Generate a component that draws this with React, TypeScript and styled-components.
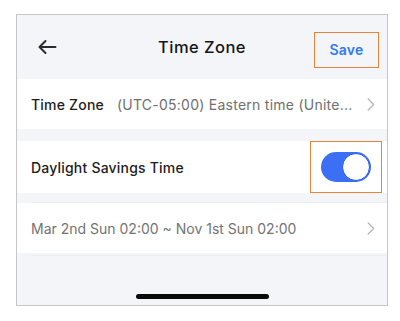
import React from 'react';
import styled, { createGlobalStyle } from 'styled-components';

const GlobalStyle = createGlobalStyle`
  html, body {
    margin: 0;
    padding: 0;
    background: #ffffff;
  }
  body {
    font-family: Inter, "Noto Sans", sans-serif;
    -webkit-font-smoothing: antialiased;
  }
`;

const App = () => {
  return (
    <>
      <GlobalStyle />
      <Page>
        <Frame>
          <Header>
            <BackButton aria-label="back">
              <svg width="20" height="16" viewBox="0 0 20 16" fill="none">
                <path
                  d="M18.5 8H2.5M8.5 2L2.5 8l6 6"
                  stroke="#2b2b2b"
                  strokeWidth="2"
                  strokeLinecap="round"
                  strokeLinejoin="round"
                />
              </svg>
            </BackButton>
            <Title>Time Zone</Title>
            <SaveBox>
              <SaveText>Save</SaveText>
            </SaveBox>
          </Header>

          <Row height={50}>
            <Label>Time Zone</Label>
            <Value>(UTC-05:00) Eastern time (Unite...</Value>
            <Chevron />
          </Row>

          <Gap size={12} />

          <Row height={52}>
            <Label>Daylight Savings Time</Label>
            <ToggleBox>
              <Toggle>
                <Knob />
              </Toggle>
            </ToggleBox>
          </Row>

          <Gap size={10} divider />

          <Row height={50}>
            <Muted>Mar 2nd Sun 02:00 ~ Nov 1st Sun 02:00</Muted>
            <Chevron />
          </Row>

          <Divider />

          <Bottom>
            <HomeBar />
          </Bottom>
        </Frame>
      </Page>
    </>
  );
};

const Chevron = () => (
  <ChevronWrap>
    <svg width="8" height="13" viewBox="0 0 8 13" fill="none">
      <path d="M1.2 1l5.5 5.5-5.5 5.5" stroke="#b5b5b5" strokeWidth="1.2" strokeLinecap="round" strokeLinejoin="round" />
    </svg>
  </ChevronWrap>
);

export default App;

const Page = styled.div`
  width: 400px;
  height: 321px;
  padding: 14px 0 0 16px;
  box-sizing: border-box;
`;

const Frame = styled.div`
  width: 372px;
  height: 292px;
  box-sizing: border-box;
  border: 1px solid #c6c6c6;
  background: #f4f5f9;
  display: flex;
  flex-direction: column;
`;

const Header = styled.div`
  height: 64px;
  display: grid;
  grid-template-columns: 1fr auto 1fr;
  align-items: center;
  padding: 0 8px;
`;

const BackButton = styled.div`
  display: flex;
  align-items: center;
  justify-self: start;
  margin-left: 12px;
  svg {
    display: block;
  }
`;

const Title = styled.div`
  font-size: 16.5px;
  font-weight: 500;
  color: #151515;
  letter-spacing: 0.45px;
`;

const SaveBox = styled.div`
  justify-self: end;
  width: 65px;
  height: 36px;
  margin-top: 5px;
  box-sizing: border-box;
  border: 1.5px solid #e8833a;
  display: flex;
  align-items: center;
  justify-content: center;
`;

const SaveText = styled.span`
  font-size: 14px;
  font-weight: 600;
  color: #2f7bf5;
  letter-spacing: 0.2px;
`;

const Row = styled.div<{ height: number }>`
  height: ${({ height }) => height}px;
  background: #ffffff;
  display: flex;
  align-items: center;
  padding: 0 6px 0 14px;
  box-sizing: border-box;
`;

const Label = styled.div`
  font-size: 14px;
  font-weight: 500;
  color: #1d1d1d;
  letter-spacing: 0.2px;
  white-space: nowrap;
`;

const Value = styled.div`
  flex: 1;
  margin-left: 13px;
  font-size: 14px;
  color: #6f6f6f;
  letter-spacing: 0.25px;
  white-space: nowrap;
  overflow: hidden;
`;

const Muted = styled.div`
  flex: 1;
  font-size: 14px;
  color: #737373;
  white-space: nowrap;
`;

const ChevronWrap = styled.div`
  width: 14px;
  display: flex;
  justify-content: flex-start;
  margin-left: auto;
  svg {
    display: block;
  }
`;

const Gap = styled.div<{ size: number; divider?: boolean }>`
  height: ${({ size }) => size}px;
  box-sizing: border-box;
  margin-left: ${({ divider }) => (divider ? '14px' : '0')};
  border-bottom: ${({ divider }) => (divider ? '1px solid #eceef2' : 'none')};
`;

const Divider = styled.div`
  height: 1px;
  margin: 2px 0 0 14px;
  background: #eceef2;
`;

const ToggleBox = styled.div`
  margin-left: auto;
  margin-right: -1px;
  width: 72px;
  height: 52px;
  box-sizing: border-box;
  border: 1.5px solid #e8833a;
  display: flex;
  align-items: center;
  justify-content: center;
`;

const Toggle = styled.div`
  width: 50px;
  height: 30px;
  border-radius: 15px;
  background: #3a6ff6;
  display: flex;
  align-items: center;
  justify-content: flex-end;
  padding: 1px;
  box-sizing: border-box;
`;

const Knob = styled.div`
  width: 28px;
  height: 28px;
  border-radius: 50%;
  background: #ffffff;
  border: 1.5px solid #2157e6;
  box-sizing: border-box;
`;

const Bottom = styled.div`
  flex: 1;
  display: flex;
  align-items: flex-end;
  justify-content: center;
  padding-bottom: 6px;
`;

const HomeBar = styled.div`
  width: 133px;
  height: 5px;
  border-radius: 3px;
  background: #0a0a0a;
`;
